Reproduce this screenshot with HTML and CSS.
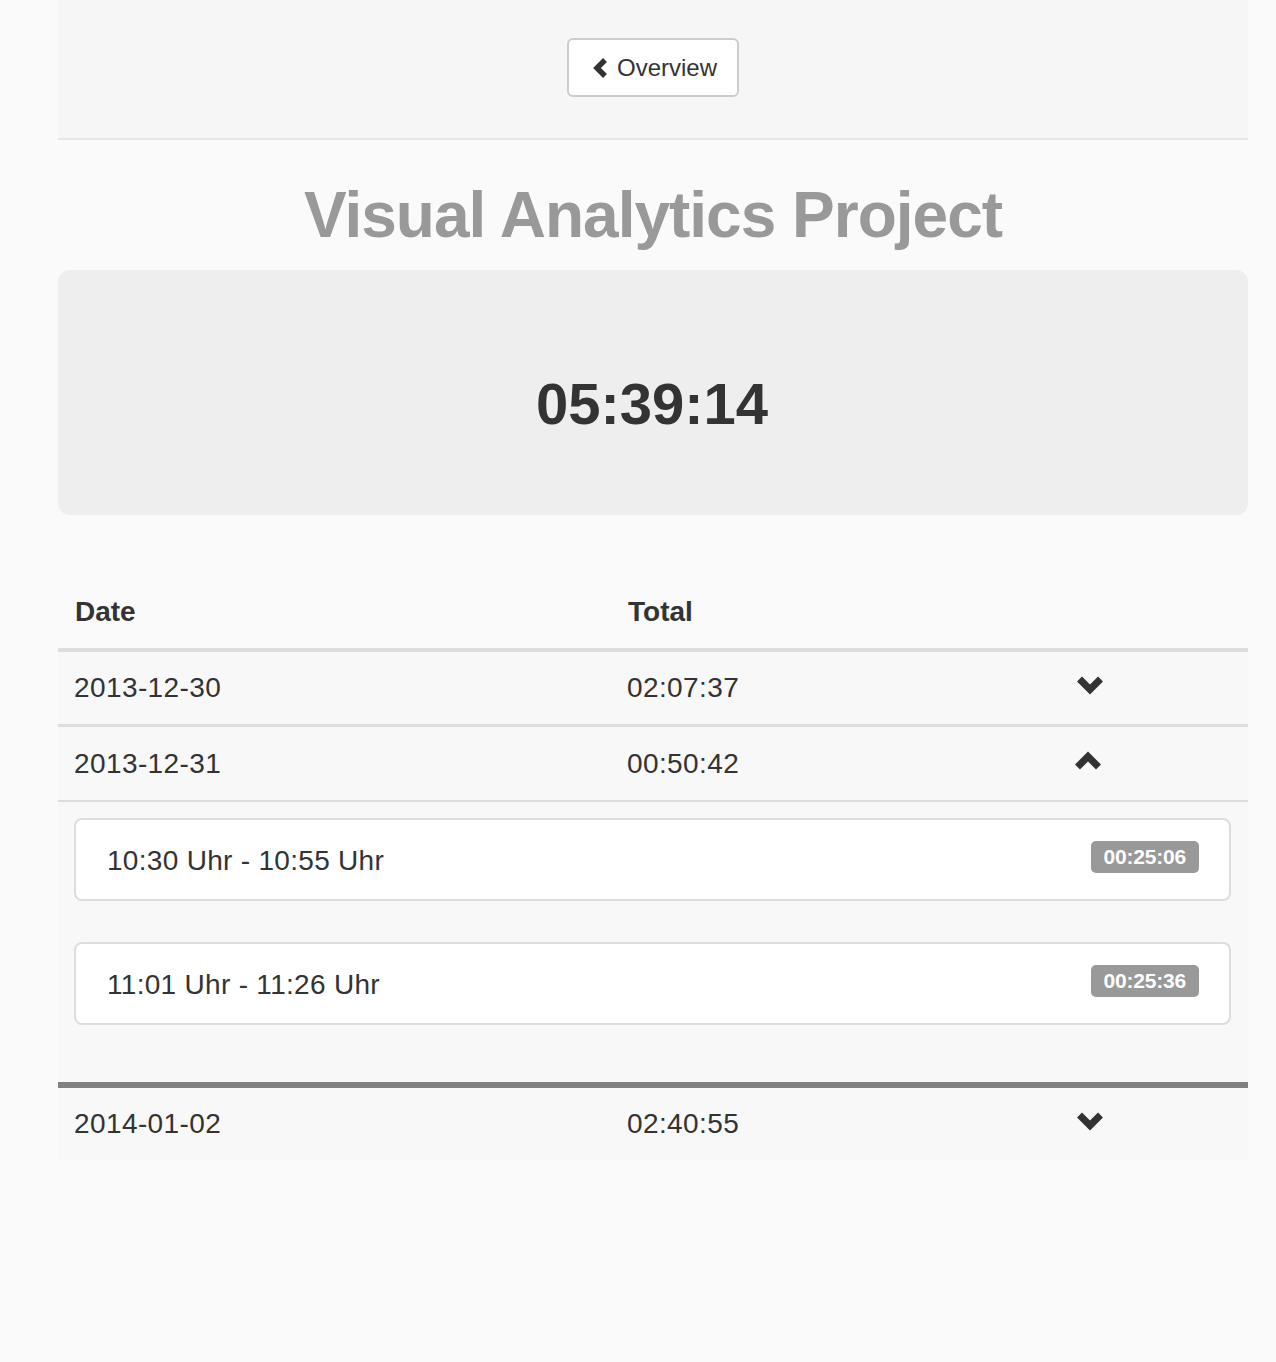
FILE: index.html
```html
<!DOCTYPE html>
<html lang="de">
<head>
<meta charset="utf-8">
<title>Visual Analytics Project</title>
<link rel="stylesheet" href="styles.css">
</head>
<body>
<div class="page">
  <header class="topbar">
    <a class="btn" href="#">
      <svg class="btn-icon" viewBox="0 0 18 22" width="18" height="22" aria-hidden="true"><polyline points="14,3 6,11 14,19" fill="none" stroke="#333" stroke-width="5.5" stroke-linejoin="miter" stroke-linecap="butt"/></svg>
      <span>Overview</span>
    </a>
  </header>

  <h1 class="title">Visual Analytics Project</h1>

  <div class="jumbo"><span class="grand-total">05:39:14</span></div>

  <table class="days">
    <colgroup>
      <col class="c-date">
      <col class="c-total">
      <col class="c-toggle">
    </colgroup>
    <thead>
      <tr><th>Date</th><th>Total</th><th></th></tr>
    </thead>
    <tbody>
      <tr class="day">
        <td>2013-12-30</td>
        <td>02:07:37</td>
        <td class="toggle"><svg class="chev" viewBox="0 0 28 20" width="28" height="20" aria-hidden="true"><polyline points="3.5,4 14,14.5 24.5,4" fill="none" stroke="#333" stroke-width="7" stroke-linejoin="miter" stroke-linecap="butt"/></svg></td>
      </tr>
      <tr class="day open">
        <td>2013-12-31</td>
        <td>00:50:42</td>
        <td class="toggle up"><svg class="chev" viewBox="0 0 28 20" width="28" height="20" aria-hidden="true"><polyline points="3.5,16 14,5.5 24.5,16" fill="none" stroke="#333" stroke-width="7" stroke-linejoin="miter" stroke-linecap="butt"/></svg></td>
      </tr>
      <tr class="details">
        <td colspan="3">
          <div class="panel"><span class="range">10:30 Uhr - 10:55 Uhr</span><span class="badge">00:25:06</span></div>
          <div class="panel"><span class="range">11:01 Uhr - 11:26 Uhr</span><span class="badge">00:25:36</span></div>
        </td>
      </tr>
      <tr class="day after">
        <td>2014-01-02</td>
        <td>02:40:55</td>
        <td class="toggle"><svg class="chev" viewBox="0 0 28 20" width="28" height="20" aria-hidden="true"><polyline points="3.5,4 14,14.5 24.5,4" fill="none" stroke="#333" stroke-width="7" stroke-linejoin="miter" stroke-linecap="butt"/></svg></td>
      </tr>
    </tbody>
  </table>
</div>
</body>
</html>
```

FILE: styles.css
```css
html, body {
  margin: 0;
  padding: 0;
  background: #fafafa;
}

body {
  font-family: "Liberation Sans", Arial, Helvetica, sans-serif;
  color: #333;
  font-size: 28px;
  line-height: 40px;
}

.page {
  width: 1190px;
  margin-left: 58px;
  padding-bottom: 200px;
}

.topbar {
  height: 140px;
  box-sizing: border-box;
  background: #f6f6f6;
  border-bottom: 2px solid #e6e6e6;
  display: flex;
  justify-content: center;
  align-items: flex-start;
  padding-top: 38px;
}

.btn {
  display: flex;
  align-items: center;
  gap: 8px;
  height: 59px;
  box-sizing: border-box;
  padding: 0 20px 0 24px;
  background: #fff;
  border: 2px solid #ccc;
  border-radius: 6px;
  color: #333;
  text-decoration: none;
  font-size: 24px;
  line-height: 36px;
}

.btn-icon {
  display: block;
  margin-left: -2px;
}

.title {
  margin: 40px 0 20px;
  text-align: center;
  font-size: 64px;
  line-height: 70px;
  font-weight: bold;
  letter-spacing: -1px;
  color: #999;
}

.jumbo {
  height: 245px;
  box-sizing: border-box;
  background: #eee;
  border-radius: 12px;
  padding-top: 105px;
  text-align: center;
}

.grand-total {
  display: inline-block;
  font-size: 58px;
  line-height: 58px;
  font-weight: bold;
  color: #333;
  margin-left: -2px;
}

.days {
  width: 1190px;
  margin-top: 61px;
  border-collapse: separate;
  border-spacing: 0;
  table-layout: fixed;
  background: #f8f8f8;
}

.c-date { width: 553px; }
.c-total { width: 449px; }
.c-toggle { width: 188px; }

.days th,
.days td {
  padding: 16px 16px;
  text-align: left;
  vertical-align: top;
  line-height: 40px;
}

.days td {
  letter-spacing: 0.4px;
}

.days th {
  font-weight: bold;
  border-bottom: 4px solid #ddd;
  padding-left: 17px;
  background: #fafafa;
}

.day.open td {
  border-top: 3px solid #ddd;
  padding-top: 17px;
}

.details td {
  border-top: 2px solid #ddd;
  padding: 16px 17px 16px 16px;
}

.day.after td {
  border-top: 6px solid #808080;
}

.toggle {
  padding-left: 16px !important;
}

.toggle.up {
  padding-left: 14px !important;
}

.chev {
  display: block;
  margin-top: 7px;
}

.toggle.up .chev {
  margin-top: 7px;
}

.panel {
  height: 83px;
  box-sizing: border-box;
  margin-bottom: 41px;
  background: #fff;
  border: 2px solid #ddd;
  border-radius: 8px;
  padding: 0 30px 0 31px;
  display: flex;
  align-items: center;
  justify-content: space-between;
}

.range {
  letter-spacing: 0.3px;
  padding-top: 2px;
}

.badge {
  display: inline-block;
  height: 32px;
  line-height: 32px;
  padding: 0 13px;
  margin-bottom: 6px;
  background: #999;
  border-radius: 5px;
  color: #fff;
  font-size: 21px;
  font-weight: bold;
  letter-spacing: -0.2px;
}
```
